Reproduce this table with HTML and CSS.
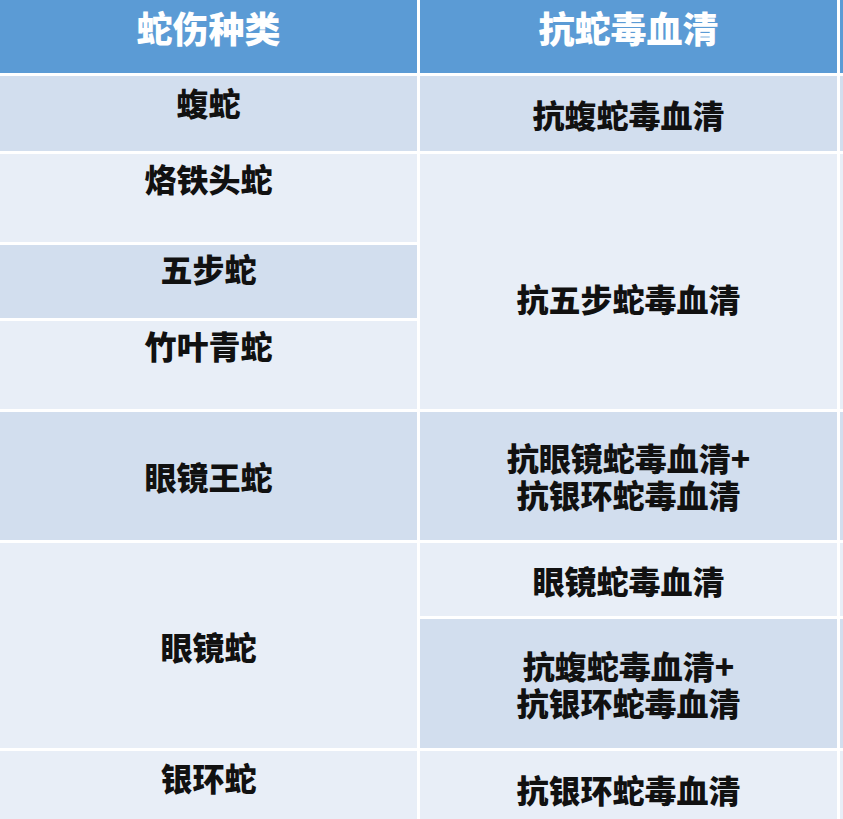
FILE: index.html
```html
<!DOCTYPE html>
<html lang="zh-CN">
<head>
<meta charset="utf-8">
<title>蛇伤种类与抗蛇毒血清</title>
<link rel="stylesheet" href="styles.css">
</head>
<body>
<div class="table">
  <div class="cell head">蛇伤种类</div>
  <div class="cell head">抗蛇毒血清</div>
  <div class="cell head edge"></div>

  <div class="cell dark name r1">蝮蛇</div>
  <div class="cell dark serum r1">抗蝮蛇毒血清</div>
  <div class="cell dark edge r1"></div>

  <div class="cell light name r2">烙铁头蛇</div>
  <div class="cell light serum wubu">抗五步蛇毒血清</div>
  <div class="cell light edge wubu"></div>
  <div class="cell dark name r3">五步蛇</div>
  <div class="cell light name r4">竹叶青蛇</div>

  <div class="cell dark serum-center r5">眼镜王蛇</div>
  <div class="cell dark serum two r5"><span class="line">抗眼镜蛇毒血清+</span><span class="line">抗银环蛇毒血清</span></div>
  <div class="cell dark edge r5"></div>

  <div class="cell light serum-center cobra">眼镜蛇</div>
  <div class="cell light serum r6a">眼镜蛇毒血清</div>
  <div class="cell light edge r6a"></div>
  <div class="cell dark serum two r6b"><span class="line">抗蝮蛇毒血清+</span><span class="line">抗银环蛇毒血清</span></div>
  <div class="cell dark edge r6b"></div>

  <div class="cell light name r7">银环蛇</div>
  <div class="cell light serum r7">抗银环蛇毒血清</div>
  <div class="cell light edge r7"></div>
</div>
</body>
</html>
```
FILE: styles.css
```css
html, body {
  margin: 0;
  padding: 0;
  background: #ffffff;
  overflow: hidden;
}

.table {
  display: grid;
  grid-template-columns: 417px 417px 10px;
  grid-template-rows: 73px 75px 88px 73px 88px 128px 73px 129px 76px;
  column-gap: 3px;
  row-gap: 3px;
  font-family: "Noto Sans CJK SC", "Noto Sans", sans-serif;
  font-weight: 900;
}

.cell {
  display: flex;
  justify-content: center;
  text-align: center;
  font-size: 32px;
  line-height: 36px;
  color: #111111;
}

.head {
  background: #5b9bd5;
  color: #ffffff;
  font-size: 36px;
  line-height: 40px;
  align-items: flex-start;
  padding-top: 7px;
}

.dark { background: #d2deee; }
.light { background: #e8eef7; }

.name {
  align-items: flex-start;
  padding-top: 8px;
}

.serum {
  align-items: center;
}

.two {
  flex-direction: column;
  align-items: center;
  justify-content: center;
}

.line {
  display: block;
  line-height: 37px;
}

.serum-center {
  align-items: center;
}

.r1 { grid-row: 2; }
.r2 { grid-row: 3; grid-column: 1; padding-top: 6px; }
.r3 { grid-row: 4; grid-column: 1; padding-top: 5px; }
.r4 { grid-row: 5; grid-column: 1; padding-top: 6px; }
.wubu { grid-row: 3 / 6; padding-top: 33px; }
.r5 { grid-row: 6; }
.cobra { grid-row: 7 / 9; grid-column: 1; }
.r6a { grid-row: 7; }
.r6b { grid-row: 8; }
.r7 { grid-row: 9; }

.edge { grid-column: 3; }
```
